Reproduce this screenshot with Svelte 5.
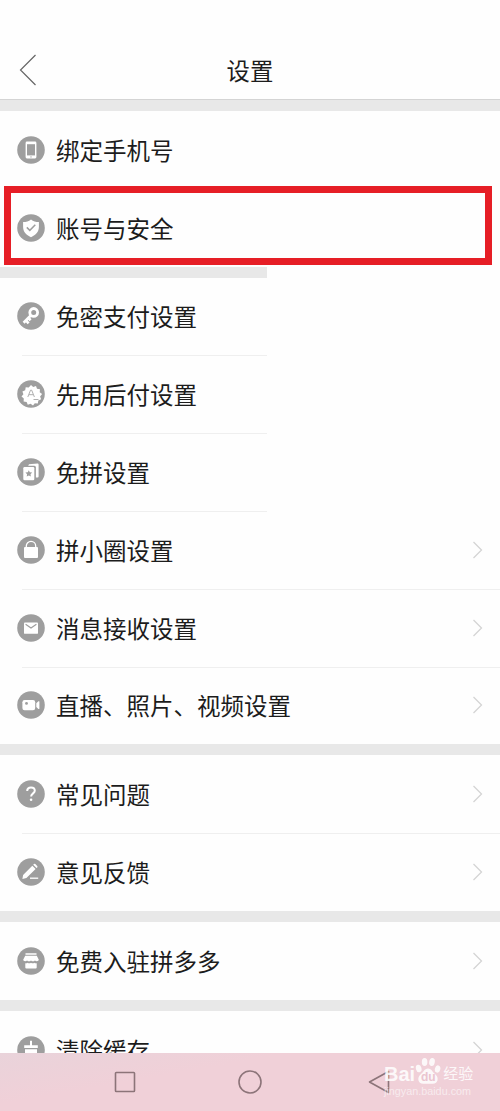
<script>
    const groups = [
        {
            short: true,
            plain: true,
            rows: [
                { icon: "phone", label: "绑定手机号" },
                { icon: "shield", label: "账号与安全", marked: true },
            ],
        },
        {
            rows: [
                { icon: "key", label: "免密支付设置", short: true },
                { icon: "badge", label: "先用后付设置", short: true },
                { icon: "cards", label: "免拼设置", short: true },
                { icon: "lock", label: "拼小圈设置", arrow: true },
                { icon: "mail", label: "消息接收设置", arrow: true },
                { icon: "video", label: "直播、照片、视频设置", arrow: true },
            ],
        },
        {
            rows: [
                { icon: "help", label: "常见问题", arrow: true },
                { icon: "pencil", label: "意见反馈", arrow: true },
            ],
        },
        { rows: [{ icon: "store", label: "免费入驻拼多多", arrow: true }] },
        { rows: [{ icon: "broom", label: "清除缓存", arrow: true }] },
    ];
</script>

<div class="screen">
    <header class="top-bar">
        <button class="back" aria-label="返回">
            <svg viewBox="0 0 18 32" fill="none" stroke="#666" stroke-width="1.2">
                <path d="M16.5 1 1.5 16l15 15" />
            </svg>
        </button>
        <h1>设置</h1>
    </header>

    <main class="list">
        {#each groups as group}
            <section class="group" class:plain={group.plain}>
                {#each group.rows as row}
                    <div class="row" class:short={row.short} class:marked={row.marked}>
                        <svg class="row-icon" viewBox="0 0 28 28" fill="#fff">
                            <circle cx="14" cy="14" r="13.8" fill="#9e9e9e" />
                            {#if row.icon === "phone"}
                                <rect x="8.6" y="5.6" width="10.8" height="16.8" rx="1.3" />
                                <rect x="10" y="8.2" width="8" height="11.2" fill="#9e9e9e" />
                                <circle cx="14" cy="20.9" r=".7" fill="#9e9e9e" />
                            {:else if row.icon === "shield"}
                                <path d="M14 5.4c2.3 1.8 4.8 2.6 7.9 2.7v4.7c0 5-3 8.2-7.9 10.4-4.9-2.2-7.9-5.4-7.9-10.4V8.1c3.1-.1 5.6-.9 7.9-2.7Z" />
                                <path d="m9.8 13.4 3 3 5.500-5.600" fill="none" stroke="#9e9e9e" stroke-width="1.5" />
                            {:else if row.icon === "key"}
                                <circle cx="16.7" cy="10.4" r="3.9" fill="none" stroke="#fff" stroke-width="2.8" />
                                <path d="m14 13.3-7.4 7.4M8.7 18.2l2.900 3.1M11.2 15.8l2.4 2.5" fill="none" stroke="#fff" stroke-width="2.7" />
                            {:else if row.icon === "badge"}
                                <path d="m14 4.9 2.2 2 2.8-1 1 2.8 3 .5-.3 3 2.4 1.9-2 2.4 1 2.8-2.8 1.2-.5 3-3-.3-1.8 2.4-2.4-1.8-2.8 1-1.2-2.8-3-.5.2-3-2.3-1.9 1.9-2.4-1-2.800 2.8-1.2.5-3 3 .3Z" />
                                <path d="m10.8 17 2.700-6.800h1.200l2.700 6.800M12 14.700h4M16.500 19.500h5" fill="none" stroke="#a6a6a6" stroke-width=".9" />
                            {:else if row.icon === "cards"}
                                <path d="m12 6.2 8.500-.7a1 1 0 0 1 1.100.9v12.100a1 1 0 0 1-1 1h-1.700V9.200a1.500 1.500 0 0 0-1.500-1.500h-6.200Z" />
                                <rect x="6.3" y="9" width="11" height="13.3" rx="1.2" />
                                <path d="m11.8 12.2 1 2.100 2.400.3-1.700 1.600.4 2.400-2.100-1.100-2.100 1.100.4-2.400-1.700-1.600 2.400-.3Z" fill="#9e9e9e" />
                            {:else if row.icon === "lock"}
                                <path d="M9.3 12v-2a4.700 4.700 0 0 1 9.400 0v2" fill="none" stroke="#fff" stroke-width="1.3" />
                                <rect x="7" y="11" width="14" height="11" rx="1" />
                            {:else if row.icon === "mail"}
                                <rect x="7" y="8.4" width="14" height="11.4" rx=".9" />
                                <path d="m8.6 10.2 5.400 3.700 5.400-3.700" fill="none" stroke="#9e9e9e" stroke-width="1.2" />
                            {:else if row.icon === "video"}
                                <rect x="5.4" y="9" width="12.8" height="10.2" rx="2.2" />
                                <circle cx="9.5" cy="12.4" r="1.4" fill="#9e9e9e" />
                                <path d="m19.3 12.2 2.100-1.900a.6.6 0 0 1 1 .5v6.600a.6.6 0 0 1-1 .5l-2.100-1.900Z" />
                            {:else if row.icon === "help"}
                                <path d="M10.2 11.1c0-2.100 1.500-3.600 3.800-3.600s3.800 1.400 3.800 3.300c0 2.500-3.700 2.700-3.700 5.700" fill="none" stroke="#fff" stroke-width="2" />
                                <circle cx="14.1" cy="19.7" r="1.3" />
                            {:else if row.icon === "pencil"}
                                <path d="m15.3 7.7 3.300 3.200-9.200 9.200-4 .8.700-4ZM16.200 6.800l.7-.7a1 1 0 0 1 1.400 0l1.900 1.900a1 1 0 0 1 0 1.400l-.7.6Z" />
                                <path d="M13 20.2h8.2" stroke="#fff" stroke-width="1.3" />
                            {:else if row.icon === "store"}
                                <path d="M8.5 6.2h11v1.600h-11ZM8.200 8.700h11.600l2 4c0 1.500-2.600 2-3.900.7-1.200 1.200-2.700 1.200-3.900 0-1.200 1.200-2.700 1.200-3.900 0-1.300 1.300-3.900.8-3.900-.7ZM8.300 16.300c1.400.2 2-.2 2.300-.6 1 .8 2.400.8 3.400 0 1 .8 2.400.8 3.400 0 .3.4.9.8 2.300.6v4.300a1 1 0 0 1-1 1H9.300a1 1 0 0 1-1-1Z" />
                            {:else if row.icon === "broom"}
                                <path d="M13 4.7h2v4.600h5.800v2.800H7.200V9.300H13ZM8 13.200h12v8.300H8Z" />
                            {/if}
                        </svg>
                        <span class="label">{row.label}</span>
                        {#if row.arrow}
                            <svg class="arrow" viewBox="0 0 11 18" fill="none" stroke="#d4d4d4" stroke-width="1.3">
                                <path d="m1.5 1 8 8-8 8" />
                            </svg>
                        {/if}
                    </div>
                {/each}
            </section>
            <div class="gap" class:short={group.short}></div>
        {/each}
    </main>

    <nav class="nav-bar">
        <svg viewBox="0 0 24 24"><rect x="2.5" y="2.5" width="19" height="19" rx=".8" /></svg>
        <svg viewBox="0 0 24 24"><circle cx="12" cy="12" r="11" /></svg>
        <svg viewBox="0 0 24 24"><path d="M21.5 1.5v21L2.5 12Z" stroke-linejoin="round" /></svg>
    </nav>

    <div class="watermark">
        <div class="brand">
            <span>Bai</span>
            <svg viewBox="0 0 26 28" fill="#fff">
                <ellipse cx="3.7" cy="11.5" rx="2.8" ry="3.8" transform="rotate(-15 3.7 11.5)" />
                <ellipse cx="9.6" cy="5" rx="2.8" ry="4" />
                <ellipse cx="17" cy="5" rx="2.8" ry="4" transform="rotate(10 17 5)" />
                <ellipse cx="22.6" cy="12" rx="2.7" ry="3.7" transform="rotate(15 22.6 12)" />
                <path d="M13 11.500c3.800 0 4.500 3.800 7.500 6 3.500 2.700 2.900 9.300-2.700 9.300H8.200c-5.600 0-6.200-6.600-2.700-9.300 3-2.200 3.700-6 7.500-6Z" />
                <text x="6" y="24">du</text>
            </svg>
            <span class="cn">经验</span>
        </div>
        <div class="site">jingyan.baidu.com</div>
    </div>
</div>

<style>
    :global(body) {
        margin: 0;
        background: #fff;
    }

    .screen {
        position: relative;
        display: flex;
        flex-direction: column;
        width: 500px;
        height: 1111px;
        overflow: hidden;
        background: #fefefe;
        color: #1c1c1c;
        font-family: "Noto Sans CJK SC", sans-serif;
    }

    .top-bar {
        flex: none;
        display: grid;
        grid-template-columns: 60px 1fr 60px;
        align-items: center;
        height: 100px;
        padding-top: 40px;
        box-sizing: border-box;
        border-bottom: 1px solid #d4d4d4;
    }
    .back {
        display: flex;
        padding: 0 0 0 19px;
        border: 0;
        background: none;
    }
    .back svg {
        width: 18px;
        height: 32px;
    }
    h1 {
        margin: 0;
        text-align: center;
        font-size: 23.4px;
        font-weight: 400;
        line-height: 34px;
    }

    .list {
        flex: 1;
        min-height: 0;
        overflow: hidden;
        border-top: 11px solid #e8e8e8;
    }
    .gap {
        height: 11px;
        background: #e8e8e8;
    }
    .gap.short {
        width: 267px;
    }

    .row {
        position: relative;
        display: flex;
        align-items: center;
        height: 77.8px;
        padding: 0 17px 0 16.5px;
        box-sizing: border-box;
    }
    .row-icon {
        flex: none;
        width: 28px;
        height: 28px;
    }
    .label {
        flex: 1;
        margin-left: 11.5px;
        font-size: 23.5px;
        line-height: 34px;
        white-space: nowrap;
    }
    .arrow {
        width: 11px;
        height: 18px;
    }
    .row:not(:last-child)::after {
        content: "";
        position: absolute;
        left: 22px;
        right: 0;
        bottom: -1px;
        height: 1px;
        background: #efefef;
    }
    .row.short::after {
        right: 233px !important;
    }
    .plain .row::after {
        display: none;
    }

    /* red frame over the account row */
    .row.marked::before {
        content: "";
        position: absolute;
        left: 4px;
        top: -3px;
        width: 488px;
        height: 79px;
        box-sizing: border-box;
        border: 7px solid #e61e26;
    }

    .nav-bar {
        flex: none;
        display: flex;
        align-items: center;
        gap: 101px;
        height: 58px;
        padding-left: 113px;
        background: linear-gradient(170deg, #e9d3da 0, #f0d0d8 35%, #f0d0d8 100%);
    }
    .nav-bar svg {
        width: 24px;
        height: 24px;
        fill: none;
        stroke: #8c7479;
        stroke-width: 1.6;
    }
    .nav-bar svg:last-child {
        margin-left: 4px;
    }

    .watermark {
        position: absolute;
        left: 384px;
        top: 1057px;
        color: #fff;
        opacity: 0.85;
        font-family: "Liberation Sans", "Noto Sans CJK SC", sans-serif;
    }
    .brand {
        display: flex;
        align-items: flex-end;
        height: 28px;
        font-size: 20px;
        font-weight: 700;
        line-height: 22px;
    }
    .brand svg {
        width: 26px;
        height: 28px;
    }
    .brand text {
        fill: #e9c3ce;
        font-size: 12px;
        font-weight: 700;
    }
    .brand .cn {
        margin-left: 2px;
        font-size: 15px;
        font-weight: 400;
    }
    .site {
        font-size: 10.8px;
        line-height: 13px;
        opacity: 0.7;
    }
</style>
